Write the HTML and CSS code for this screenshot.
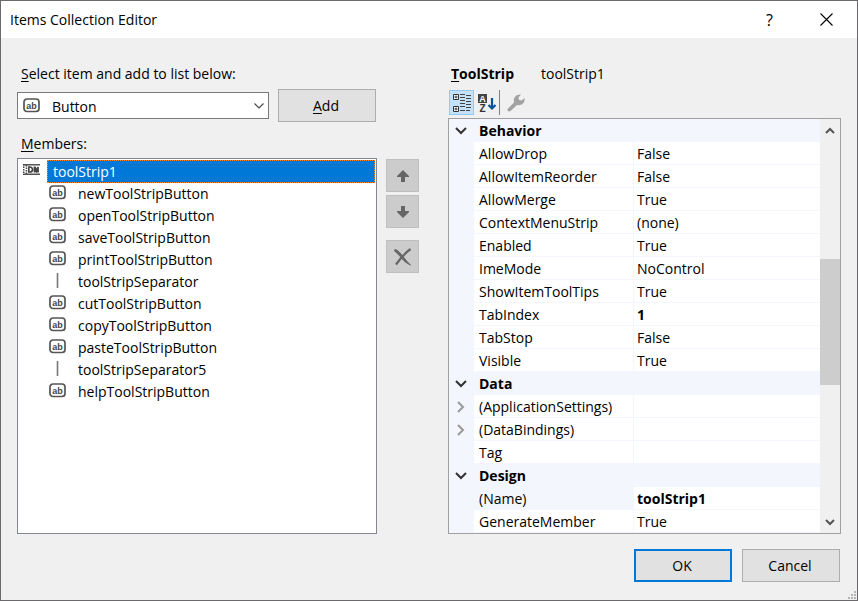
FILE: index.html
```
<!DOCTYPE html>
<html lang="en">
<head>
    <meta charset="UTF-8">
    <meta name="viewport" content="width=device-width, initial-scale=1.0">
    <title>Items Collection Editor</title>
    <link rel="stylesheet" href="styles.css">
</head>
<body>
    <!-- shared icons -->
    <svg class="sprite" aria-hidden="true">
        <symbol id="icon-button" viewBox="0 0 17 15">
            <rect x="1" y="1" width="15" height="12.5" rx="3" fill="#fff" stroke="#555" stroke-width="1.7"/>
            <text x="8.5" y="10.5" text-anchor="middle" font-family="Liberation Sans, sans-serif" font-size="9" font-weight="bold" fill="#444">ab</text>
        </symbol>
        <symbol id="icon-separator" viewBox="0 0 17 15">
            <path d="M8.500 0v15" stroke="#777" stroke-width="1.6"/>
        </symbol>
        <symbol id="icon-toolstrip" viewBox="0 0 17 11">
            <path d="M0 .7h17M0 10.3h17" stroke="#555" stroke-width="1.4"/>
            <path d="M.7 0v11M3.4 1v9" stroke="#444" stroke-width="1.5" stroke-dasharray="1.5 1"/>
            <path d="M5.8 3v5h1.2a2.5 2.5 0 0 0 0-5zM11.500 8.5v-6M12 3l1.500 4 1.500-4v5.5M12 7.500h4" fill="none" stroke="#444" stroke-width="1.7"/>
        </symbol>
        <symbol id="icon-down" viewBox="0 0 12 8">
            <path d="M1 1l5 5 5-5" fill="none" stroke="currentColor" stroke-width="2"/>
        </symbol>
        <symbol id="icon-right" viewBox="0 0 8 12">
            <path d="M1 1l5 5-5 5" fill="none" stroke="currentColor" stroke-width="2"/>
        </symbol>
    </svg>

    <div class="dialog">
        <header class="titlebar">
            <h1>Items Collection Editor</h1>
            <button class="title-button help" aria-label="Help">?</button>
            <button class="title-button" aria-label="Close">
                <svg width="13" height="13" viewBox="0 0 13 13"><path d="M.5.5l12 12M12.5.5l-12 12" stroke="#000" stroke-width="1.1"/></svg>
            </button>
        </header>

        <main class="content">
            <section class="members">
                <label class="caption" for="itemType"><u>S</u>elect item and add to list below:</label>
                <div class="add-row">
                    <div class="combo">
                        <svg class="combo-icon" width="17" height="15"><use href="#icon-button"/></svg>
                        <select id="itemType">
                            <option>Button</option>
                        </select>
                        <svg class="combo-arrow" width="10" height="6" viewBox="0 0 10 6"><path d="M.5.5L5 5 9.500.5" fill="none" stroke="#444" stroke-width="1.1"/></svg>
                    </div>
                    <button class="button"><span><u>A</u>dd</span></button>
                </div>
                <div class="caption members-caption" id="membersCaption"><u>M</u>embers:</div>
                <ul class="member-list" aria-labelledby="membersCaption">
                    <li class="root">
                        <svg width="17" height="11"><use href="#icon-toolstrip"/></svg>
                        <span class="selected">toolStrip1</span>
                    </li>
                    <li><svg width="17" height="15"><use href="#icon-button"/></svg>newToolStripButton</li>
                    <li><svg width="17" height="15"><use href="#icon-button"/></svg>openToolStripButton</li>
                    <li><svg width="17" height="15"><use href="#icon-button"/></svg>saveToolStripButton</li>
                    <li><svg width="17" height="15"><use href="#icon-button"/></svg>printToolStripButton</li>
                    <li><svg width="17" height="15"><use href="#icon-separator"/></svg>toolStripSeparator</li>
                    <li><svg width="17" height="15"><use href="#icon-button"/></svg>cutToolStripButton</li>
                    <li><svg width="17" height="15"><use href="#icon-button"/></svg>copyToolStripButton</li>
                    <li><svg width="17" height="15"><use href="#icon-button"/></svg>pasteToolStripButton</li>
                    <li><svg width="17" height="15"><use href="#icon-separator"/></svg>toolStripSeparator5</li>
                    <li><svg width="17" height="15"><use href="#icon-button"/></svg>helpToolStripButton</li>
                </ul>
            </section>

            <div class="order-buttons">
                <button class="icon-button" aria-label="Move up">
                    <svg width="12" height="12" viewBox="0 0 12 12"><path d="M6 0l6 6v1H8v5H4V7H0V6z" fill="#666"/></svg>
                </button>
                <button class="icon-button" aria-label="Move down">
                    <svg width="12" height="12" viewBox="0 0 12 12"><path d="M6 12l6-6V5H8V0H4v5H0v1z" fill="#666"/></svg>
                </button>
                <button class="icon-button delete" aria-label="Remove">
                    <svg width="18" height="18" viewBox="0 0 18 18"><path d="M1 1.500C4 2 6 5 9 8.500S13 14 16.500 17C12 15 10 13 7.500 10S3 5 .5 3z" fill="#666" stroke="#666"/><path d="M16.500 1C11 5 6 11 2 16.500" fill="none" stroke="#666" stroke-width="2.200"/></svg>
                </button>
            </div>

            <section class="properties">
                <div class="caption properties-caption"><b><u>T</u>oolStrip</b><span>toolStrip1</span></div>
                <div class="toolbar">
                    <button class="tool active" aria-label="Categorized">
                        <svg width="18" height="18" viewBox="0 0 18 18">
                            <path d="M.5.5h5v5h-5zM.5 12.500h5v5h-5z" fill="#fff" stroke="#333"/>
                            <path d="M3 1.500v3M1.500 3h3M3 13.500v3M1.500 15h3" stroke="#333"/>
                            <path d="M7 .5h5M7 3.500h5M7 6.500h5M7 9.500h5M7 12.500h5M7 16.500h5M13 1.500h5M13 4.500h5M13 7.500h5M13 10.500h5M13 13.500h5M13 16.500h4" stroke="#444"/>
                        </svg>
                    </button>
                    <button class="tool" aria-label="Alphabetical">
                        <svg width="18" height="18" viewBox="0 0 18 18">
                            <path d="M0 0h9v9H0z" fill="#444"/>
                            <text x="4.500" y="8" text-anchor="middle" font-family="Liberation Sans, sans-serif" font-size="9" font-weight="bold" fill="#fff">A</text>
                            <text x="4.500" y="18" text-anchor="middle" font-family="Liberation Sans, sans-serif" font-size="10" font-weight="bold" fill="#333">Z</text>
                            <path d="M14 4v10M10.500 11l3.500 3.500 3.500-3.500" fill="none" stroke="#0a519c" stroke-width="2.200"/>
                        </svg>
                    </button>
                    <span class="tool-divider"></span>
                    <button class="tool" aria-label="Property pages" disabled>
                        <svg width="18" height="18" viewBox="0 0 18 18"><path d="M1 14.500l6-6C6 4 9 0 14 .5L11.500 3.500l.5 2.500 2.500.5L17.500 4c.8 5-3 8-7.500 7l-6.500 6c-2 1.500-4-1-2.500-2.500z" fill="#a2a2a2"/></svg>
                    </button>
                </div>
                <div class="property-grid">
                    <table>
                        <colgroup>
                            <col class="gutter-col">
                            <col class="name-col">
                            <col>
                        </colgroup>
                        <tbody>
                            <tr class="category"><td><button class="expander" aria-label="Collapse"><svg width="12" height="8"><use href="#icon-down"/></svg></button></td><th colspan="2">Behavior</th></tr>
                            <tr><td></td><th>AllowDrop</th><td>False</td></tr>
                            <tr><td></td><th>AllowItemReorder</th><td>False</td></tr>
                            <tr><td></td><th>AllowMerge</th><td>True</td></tr>
                            <tr><td></td><th>ContextMenuStrip</th><td>(none)</td></tr>
                            <tr><td></td><th>Enabled</th><td>True</td></tr>
                            <tr><td></td><th>ImeMode</th><td>NoControl</td></tr>
                            <tr><td></td><th>ShowItemToolTips</th><td>True</td></tr>
                            <tr><td></td><th>TabIndex</th><td><b>1</b></td></tr>
                            <tr><td></td><th>TabStop</th><td>False</td></tr>
                            <tr><td></td><th>Visible</th><td>True</td></tr>
                            <tr class="category"><td><button class="expander" aria-label="Collapse"><svg width="12" height="8"><use href="#icon-down"/></svg></button></td><th colspan="2">Data</th></tr>
                            <tr><td><button class="expander closed" aria-label="Expand"><svg width="8" height="12"><use href="#icon-right"/></svg></button></td><th>(ApplicationSettings)</th><td></td></tr>
                            <tr><td><button class="expander closed" aria-label="Expand"><svg width="8" height="12"><use href="#icon-right"/></svg></button></td><th>(DataBindings)</th><td></td></tr>
                            <tr><td></td><th>Tag</th><td></td></tr>
                            <tr class="category"><td><button class="expander" aria-label="Collapse"><svg width="12" height="8"><use href="#icon-down"/></svg></button></td><th colspan="2">Design</th></tr>
                            <tr class="current"><td></td><th>(Name)</th><td><b>toolStrip1</b></td></tr>
                            <tr><td></td><th>GenerateMember</th><td>True</td></tr>
                        </tbody>
                    </table>
                    <div class="scrollbar">
                        <button class="scroll-button" aria-label="Scroll up"><svg width="10" height="7" viewBox="0 0 10 7"><path d="M1 6l4-4 4 4" fill="none" stroke="#555" stroke-width="2"/></svg></button>
                        <div class="track">
                            <div class="thumb"></div>
                        </div>
                        <button class="scroll-button" aria-label="Scroll down"><svg width="10" height="7" viewBox="0 0 10 7"><path d="M1 1l4 4 4-4" fill="none" stroke="#555" stroke-width="2"/></svg></button>
                    </div>
                </div>
            </section>
        </main>

        <footer class="actions">
            <button class="button default">OK</button>
            <button class="button">Cancel</button>
        </footer>
        <svg class="grip" width="9" height="9" viewBox="0 0 9 9"><path d="M6 0h2v2H6zM3 3h2v2H3zM6 3h2v2H6zM0 6h2v2H0zM3 6h2v2H3zM6 6h2v2H6z" fill="#b5b5b5"/></svg>
    </div>
</body>
</html>
```
FILE: styles.css
```
* {
    box-sizing: border-box;
}

body {
    margin: 0;
    font-family: "Open Sans", "Noto Sans", sans-serif;
    font-size: 14px;
    line-height: 20px;
    color: #000;
}

button,
select {
    font: inherit;
    color: inherit;
    border-radius: 0;
}

svg {
    display: block;
    flex: none;
    overflow: visible;
}

u {
    text-underline-offset: 2px;
}

.sprite {
    display: none;
}

.dialog {
    position: relative;
    display: flex;
    flex-direction: column;
    min-height: 100vh;
    border: 1px solid #6b696b;
    background-color: #f0f0f0;
}

/* title bar */
.titlebar {
    display: flex;
    align-items: center;
    height: 37px;
    padding: 0 2px 0 9px;
    background-color: #fff;
}

.titlebar h1 {
    flex: 1;
    margin: 0;
    font-size: 14px;
    font-weight: normal;
}

.title-button {
    display: flex;
    align-items: center;
    justify-content: center;
    width: 57px;
    height: 37px;
    padding: 0;
    border: 0;
    background: none;
}

.title-button.help {
    font-size: 16px;
}

.content {
    flex: 1;
    display: grid;
    grid-template-columns: 360fr 71px 393fr;
    padding: 26px 16px 0;
}

.caption {
    display: block;
    padding-left: 4px;
}

.button {
    display: flex;
    align-items: center;
    justify-content: center;
    width: 98px;
    height: 33px;
    padding: 0 2px 0 0;
    border: 1px solid #adadad;
    background-color: #e1e1e1;
}

.button.default {
    border: 2px solid #0078d7;
}

/* left side */
.members {
    display: flex;
    flex-direction: column;
}

.add-row {
    display: flex;
    align-items: center;
    gap: 9px;
    margin-top: 5px;
    padding-right: 1px;
}

.combo {
    position: relative;
    flex: 1;
}

.combo select {
    display: block;
    width: 100%;
    height: 27px;
    padding: 2px 24px 0 34px;
    border: 1px solid #7a7a7a;
    background-color: #fff;
    appearance: none;
}

.combo-icon,
.combo-arrow {
    position: absolute;
    pointer-events: none;
}

.combo-icon {
    left: 6px;
    top: 6px;
}

.combo-arrow {
    right: 5px;
    top: 11px;
}

.members-caption {
    margin-top: 12px;
}

.member-list {
    flex: 1;
    margin: 4px 0 0;
    padding: 1px;
    border: 1px solid #828790;
    background-color: #fff;
    list-style: none;
}

.member-list li {
    display: flex;
    align-items: center;
    gap: 12px;
    height: 22px;
    padding-left: 30px;
    line-height: 24px;
}

.member-list li svg {
    margin-bottom: 4px;
}

.member-list .root {
    gap: 7px;
    height: 23px;
    padding-left: 4px;
}

.selected {
    flex: 1;
    height: 23px;
    padding-left: 5px;
    border: 1px dotted #ff8728;
    background-color: #0078d7;
    color: #fff;
    line-height: 22px;
}

/* move and remove buttons */
.order-buttons {
    display: flex;
    flex-direction: column;
    gap: 3px;
    padding: 95px 29px 0 9px;
}

.icon-button {
    display: flex;
    align-items: center;
    justify-content: center;
    height: 33px;
    padding: 0;
    border: 1px solid #bfbfbf;
    background-color: #ccc;
}

.icon-button.delete {
    margin-top: 9px;
}

/* right side */
.properties-caption {
    display: flex;
    gap: 27px;
    padding-left: 3px;
}

.toolbar {
    display: flex;
    align-items: center;
    height: 25px;
    margin: 6px 0 3px;
    padding-left: 1px;
}

.tool {
    display: flex;
    align-items: center;
    justify-content: center;
    width: 25px;
    height: 25px;
    padding: 0;
    border: 1px solid transparent;
    background: none;
}

.tool.active {
    border-color: #90c8f6;
    background-color: #c4e1f8;
}

.tool-divider {
    width: 1px;
    height: 25px;
    margin: 0 3px 0 0;
    background-color: #808080;
}

.property-grid {
    display: flex;
    border: 1px solid #a0a0a0;
    background-color: #fff;
}

table {
    flex: 1;
    table-layout: fixed;
    border-collapse: separate;
    border-spacing: 0;
}

.gutter-col {
    width: 25px;
}

.name-col {
    width: 160px;
}

td,
th {
    height: 23px;
    padding: 2px 3px 0;
    border-bottom: 1px solid #f3f6fc;
    font-weight: normal;
    text-align: left;
    white-space: nowrap;
}

th {
    padding-left: 5px;
    border-right: 1px solid #f3f6fc;
}

td:first-child,
.category th,
.current th {
    background-color: #f3f6fc;
}

td:first-child {
    padding: 0;
}

.category th {
    font-weight: bold;
}

.expander {
    display: flex;
    align-items: center;
    justify-content: center;
    width: 24px;
    height: 22px;
    padding: 2px 0 0;
    border: 0;
    background: none;
    color: #333;
}

.expander.closed {
    color: #999;
}

.scrollbar {
    display: flex;
    flex-direction: column;
    width: 20px;
    background-color: #f0f0f0;
}

.scroll-button {
    display: flex;
    align-items: center;
    justify-content: center;
    height: 22px;
    padding: 0;
    border: 0;
    background: none;
}

.track {
    flex: 1;
    display: flex;
    flex-direction: column;
    padding-top: 118px;
}

.thumb {
    height: 126px;
    background-color: #cdcdcd;
}

.actions {
    display: flex;
    justify-content: flex-end;
    gap: 10px;
    padding: 15px 17px 18px;
}

.grip {
    position: absolute;
    right: 0;
    bottom: 0;
}
```
